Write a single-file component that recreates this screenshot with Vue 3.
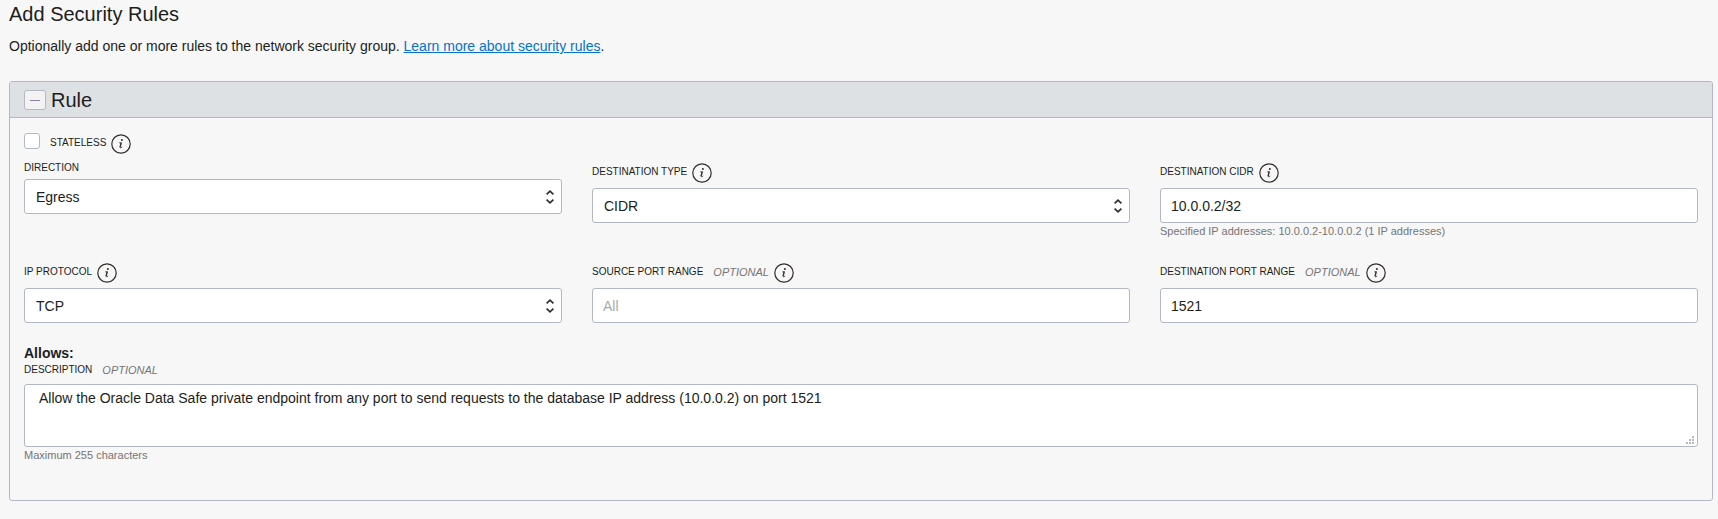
<script setup>
import { reactive, ref, h } from 'vue'

const rule = reactive({
  stateless: false,
  direction: 'Egress',
  destinationType: 'CIDR',
  cidr: '10.0.0.2/32',
  protocol: 'TCP',
  sourcePorts: '',
  destinationPorts: '1521',
  description:
    'Allow the Oracle Data Safe private endpoint from any port to send requests to the database IP address (10.0.0.2) on port 1521',
})
const open = ref(true)

const InfoIcon = () =>
  h('svg', { width: 20, height: 20, viewBox: '0 0 20 20', fill: 'none', 'aria-hidden': 'true' }, [
    h('circle', { cx: 10, cy: 10, r: 9.2, stroke: '#312d2a', 'stroke-width': 1.2 }),
    h('circle', { cx: 10.9, cy: 6, r: 1, fill: '#312d2a' }),
    h('path', { d: 'M8.2 8.9 L10.4 8.6 L9.2 13.1 Q9 14.1 9.9 13.8 L11.2 12.9', stroke: '#312d2a', 'stroke-width': 0.8 }),
    h('path', { d: 'M10.1 8.8 L9 13.2', stroke: '#312d2a', 'stroke-width': 1.2 }),
  ])

const Chevrons = () =>
  h('svg', { width: 8, height: 14, viewBox: '0 0 8 14', fill: 'none', 'aria-hidden': 'true' }, [
    h('path', { d: 'M0.6 4.4 L4 1.2 L7.4 4.4 M0.6 9.6 L4 12.8 L7.4 9.6', stroke: '#312d2a', 'stroke-width': 1.7 }),
  ])
</script>

<template>
  <main class="page">
    <h1>Add Security Rules</h1>
    <p class="intro">
      Optionally add one or more rules to the network security group.
      <a href="#security-rules">Learn more about security rules</a>.
    </p>

    <section class="panel">
      <header class="panel-head">
        <button type="button" class="toggle" aria-label="Collapse rule" :aria-expanded="open" @click="open = !open">
          <svg width="10" height="10" viewBox="0 0 10 10" aria-hidden="true">
            <path d="M0 5.5H10" stroke="#8d7f99" stroke-width="1" />
          </svg>
        </button>
        <h2>Rule</h2>
      </header>

      <form v-if="open" class="panel-body" @submit.prevent>
        <div class="stateless">
          <input id="stateless" v-model="rule.stateless" type="checkbox" />
          <div class="caption">
            <label for="stateless">STATELESS</label>
            <button type="button" class="info" aria-label="About stateless"><InfoIcon /></button>
          </div>
        </div>

        <div class="fields">
          <div class="field">
            <div class="caption"><label class="short" for="direction">DIRECTION</label></div>
            <div class="select">
              <select id="direction" v-model="rule.direction">
                <option>Egress</option>
                <option>Ingress</option>
              </select>
              <Chevrons class="chevrons" />
            </div>
          </div>

          <div class="field">
            <div class="caption tall">
              <label for="dest-type">DESTINATION TYPE</label>
              <button type="button" class="info" aria-label="About destination type"><InfoIcon /></button>
            </div>
            <div class="select">
              <select id="dest-type" v-model="rule.destinationType">
                <option>CIDR</option>
                <option>Service</option>
              </select>
              <Chevrons class="chevrons" />
            </div>
          </div>

          <div class="field">
            <div class="caption tall">
              <label for="cidr">DESTINATION CIDR</label>
              <button type="button" class="info" aria-label="About destination CIDR"><InfoIcon /></button>
            </div>
            <input id="cidr" v-model="rule.cidr" type="text" />
            <p class="hint">Specified IP addresses: 10.0.0.2-10.0.0.2 (1 IP addresses)</p>
          </div>

          <div class="field">
            <div class="caption tall">
              <label for="protocol">IP PROTOCOL</label>
              <button type="button" class="info" aria-label="About IP protocol"><InfoIcon /></button>
            </div>
            <div class="select">
              <select id="protocol" v-model="rule.protocol">
                <option>TCP</option>
                <option>UDP</option>
              </select>
              <Chevrons class="chevrons" />
            </div>
          </div>

          <div class="field">
            <div class="caption tall">
              <label for="source-ports">SOURCE PORT RANGE</label>
              <em>OPTIONAL</em>
              <button type="button" class="info" aria-label="About source port range"><InfoIcon /></button>
            </div>
            <input id="source-ports" v-model="rule.sourcePorts" type="text" placeholder="All" />
          </div>

          <div class="field">
            <div class="caption tall">
              <label for="dest-ports">DESTINATION PORT RANGE</label>
              <em>OPTIONAL</em>
              <button type="button" class="info" aria-label="About destination port range"><InfoIcon /></button>
            </div>
            <input id="dest-ports" v-model="rule.destinationPorts" type="text" />
          </div>
        </div>

        <p class="allows">Allows:</p>
        <div class="caption">
          <label class="short" for="description">DESCRIPTION</label>
          <em class="short">OPTIONAL</em>
        </div>
        <div class="area">
          <textarea id="description" v-model="rule.description" maxlength="255"></textarea>
          <svg class="grip" width="8" height="8" viewBox="0 0 8 8" fill="#b5b9c3" aria-hidden="true">
            <path d="M6 0h2v2H6zM3 3h2v2H3zM6 3h2v2H6zM0 6h2v2H0zM3 6h2v2H3zM6 6h2v2H6z" />
          </svg>
        </div>
        <p class="hint">Maximum 255 characters</p>
      </form>
    </section>
  </main>
</template>

<style>
body {
  background: #f7f7f7;
}
</style>

<style scoped>
.page {
  padding: 0 5px 18px 9px;
  color: #201e1c;
  font: 14px/20px "Liberation Sans", Arial, sans-serif;
}
.page * {
  box-sizing: border-box;
}
h1,
h2,
p {
  margin: 0;
}
h1,
h2 {
  font-size: 20px;
  line-height: 28px;
  font-weight: 400;
}
.intro {
  margin: 8px 0 25px;
}
a {
  color: #0572ce;
  text-decoration: underline;
}
.panel {
  border: 1px solid #b2b9c3;
  border-radius: 3px;
}
.panel-head {
  display: flex;
  align-items: center;
  gap: 5px;
  height: 36px;
  padding: 0 14px;
  background: #dee1e4;
  border-bottom: 1px solid #b2b9c3;
  border-radius: 2px 2px 0 0;
}
button {
  display: flex;
  align-items: center;
  justify-content: center;
  flex: none;
  padding: 0;
  border: 0;
  background: none;
  cursor: pointer;
}
.toggle {
  width: 22px;
  height: 20px;
  border: 1px solid #b2b9c3;
  border-radius: 3px;
  background: #f3f3f3;
}
.panel-body {
  padding: 15px 14px 37px;
}
.stateless {
  display: flex;
  gap: 10px;
  margin-bottom: 6px;
}
.stateless input {
  appearance: none;
  width: 16px;
  height: 16px;
  margin: 0;
  background: #fff;
  border: 1px solid #b2b9c3;
  border-radius: 3px;
}
.stateless input:checked {
  background: #0572ce;
}
.fields {
  display: grid;
  grid-template-columns: repeat(3, minmax(0, 1fr));
  gap: 21px 30px;
}
.caption {
  display: flex;
  align-items: flex-start;
}
.caption label {
  font-size: 10px;
}
.caption em {
  margin-left: 10px;
  color: #757575;
  font-size: 11px;
}
.caption .short {
  line-height: 16px;
}
.tall {
  padding: 2px 0;
}
.info {
  width: 20px;
  height: 20px;
  margin: 1px 0 0 5px;
}
.field .caption {
  margin-bottom: 3px;
}
.select,
.area {
  position: relative;
}
select,
.field input,
textarea {
  display: block;
  width: 100%;
  margin: 0;
  color: inherit;
  font: inherit;
  background: #fff;
  border: 1px solid #b2b9c3;
  border-radius: 3px;
}
select,
.field input {
  appearance: none;
  height: 35px;
  padding: 0 10px;
}
.select select {
  padding: 0 11px;
}
.field input::placeholder {
  color: #a5aca9;
  opacity: 1;
}
.chevrons {
  position: absolute;
  top: 11px;
  right: 8px;
  pointer-events: none;
}
.hint {
  color: #757575;
  font-size: 11px;
  line-height: 16px;
}
.allows {
  margin-top: 21px;
  font-weight: 700;
  line-height: 18px;
}
.area {
  margin-top: 6px;
}
textarea {
  height: 63px;
  padding: 3px 14px;
  resize: none;
}
.grip {
  position: absolute;
  right: 4px;
  bottom: 3px;
  pointer-events: none;
}
</style>
